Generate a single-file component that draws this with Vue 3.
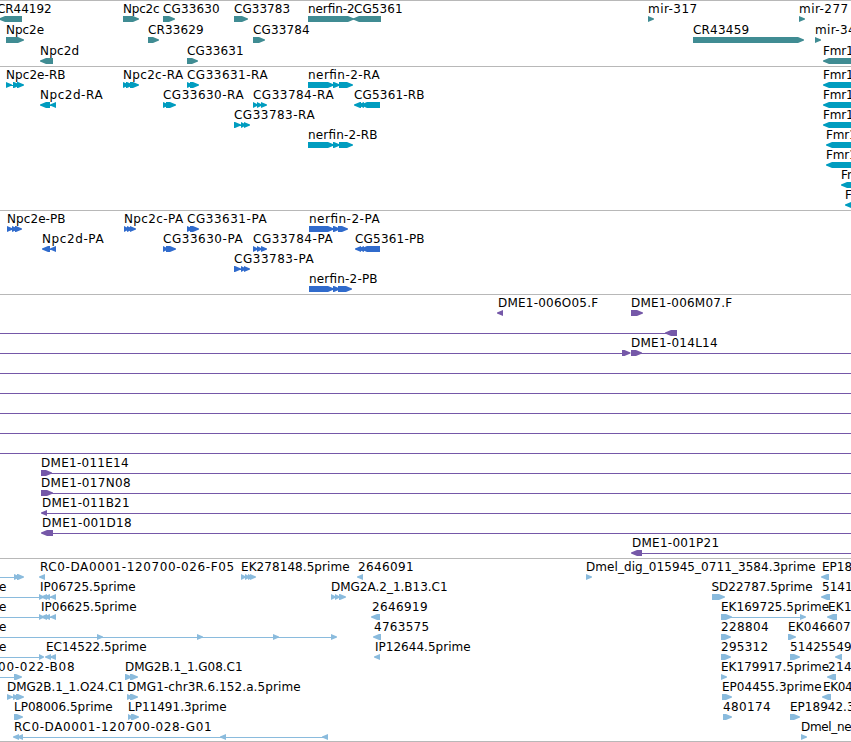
<script setup>
// Label: [row, left edge, right edge, text]
// Shape: [row, direction, [start, end], ...]
// Line:  [row, start, end]
const tracks = [
  {
    name: 'gene', height: 66, pitch: 21, color: '#408c93',
    lines: [],
    labels: [
      [0, -2, 51, 'CR44192'], [0, 124, 159, 'Npc2c'], [0, 164, 219, 'CG33630'], [0, 235, 289.5, 'CG33783'],
      [0, 309, 354, 'nerfin-2'], [0, 355, 402, 'CG5361'], [0, 649, 696.5, 'mir-317'], [0, 800, 847.5, 'mir-277'],
      [1, 7, 43.5, 'Npc2e'], [1, 149, 203, 'CR33629'], [1, 254, 309, 'CG33784'], [1, 694, 748.5, 'CR43459'], [1, 816, 855, 'mir-34'],
      [2, 41, 78.5, 'Npc2d'], [2, 188, 243, 'CG33631'], [2, 824, 853, 'Fmr1']
    ],
    shapes: [
      [0, 'l', [-1, 22]], [0, 'r', [123, 139]], [0, 'r', [163, 175]], [0, 'r', [234, 248]], [0, 'r', [308, 354]],
      [0, 'l', [353, 381]], [0, 'r', [648, 654]], [0, 'r', [799, 805]],
      [1, 'r', [6, 24]], [1, 'r', [148, 159]], [1, 'r', [253, 265]], [1, 'r', [693, 804]], [1, 'r', [815, 821]],
      [2, 'l', [40, 53]], [2, 'r', [187, 198]], [2, 'l', [823, 870]]
    ]
  },
  {
    name: 'transcript', height: 144, pitch: 20, color: '#009cbf',
    lines: [],
    labels: [
      [0, 7, 65, 'Npc2e-RB'], [0, 124, 182.5, 'Npc2c-RA'], [0, 188, 267, 'CG33631-RA'], [0, 309, 379, 'nerfin-2-RA'], [0, 824, 853, 'Fmr1'],
      [1, 41, 102, 'Npc2d-RA'], [1, 164, 243, 'CG33630-RA'], [1, 254, 333, 'CG33784-RA'], [1, 355, 424, 'CG5361-RB'], [1, 824, 853, 'Fmr1'],
      [2, 235, 314, 'CG33783-RA'], [2, 824, 853, 'Fmr1'],
      [3, 309, 377, 'nerfin-2-RB'], [3, 827, 856, 'Fmr1'],
      [4, 827, 856, 'Fmr1'], [5, 842, 858, 'Fm'], [6, 846, 852, 'F']
    ],
    shapes: [
      [0, 'r', [6, 12], [13, 20], [17, 24]], [0, 'r', [123, 129], [126, 133], [130, 139]], [0, 'r', [187, 193], [190, 199]],
      [0, 'r', [308, 334], [333, 340], [339, 353]], [0, 'l', [823, 870]],
      [1, 'l', [40, 50], [50, 56]], [1, 'r', [163, 169], [166, 176]], [1, 'r', [253, 258], [257, 262], [261, 267]],
      [1, 'l', [354, 361], [358, 364], [361, 380]], [1, 'l', [823, 870]],
      [2, 'r', [234, 241], [241, 246], [244, 250]], [2, 'l', [823, 870]],
      [3, 'r', [308, 334], [333, 340], [339, 353]], [3, 'l', [826, 870]],
      [4, 'l', [826, 870]], [5, 'l', [841, 870]], [6, 'l', [845, 870]]
    ]
  },
  {
    name: 'protein', height: 84, pitch: 20, color: '#306bcc',
    lines: [],
    labels: [
      [0, 8, 65, 'Npc2e-PB'], [0, 125, 182.5, 'Npc2c-PA'], [0, 188, 266, 'CG33631-PA'], [0, 310, 379, 'nerfin-2-PA'],
      [1, 43, 103, 'Npc2d-PA'], [1, 164, 242, 'CG33630-PA'], [1, 254, 332, 'CG33784-PA'], [1, 356, 424, 'CG5361-PB'],
      [2, 235, 313, 'CG33783-PA'],
      [3, 310, 377, 'nerfin-2-PB']
    ],
    shapes: [
      [0, 'r', [7, 13], [12, 18], [15, 22]], [0, 'r', [124, 129], [127, 133], [130, 136]], [0, 'r', [187, 193], [190, 199]],
      [0, 'r', [309, 334], [333, 340], [338, 348]],
      [1, 'l', [42, 50], [50, 56]], [1, 'r', [163, 168], [166, 176]], [1, 'r', [253, 258], [257, 262], [261, 267]],
      [1, 'l', [355, 361], [358, 364], [361, 380]],
      [2, 'r', [234, 241], [241, 246], [244, 250]],
      [3, 'r', [309, 334], [333, 340], [338, 352]]
    ]
  },
  {
    name: 'clone', height: 264, pitch: 20, color: '#7558a8',
    lines: [
      [1, 0, 668], [2, 0, 624], [2, 640, 851], [3, 0, 851], [4, 0, 851], [5, 0, 851], [6, 0, 851], [7, 0, 851],
      [8, 49, 851], [9, 49, 851], [10, 47, 851], [11, 53, 851], [12, 642, 851]
    ],
    labels: [
      [0, 499, 597.5, 'DME1-006O05.F'], [0, 632, 731.5, 'DME1-006M07.F'],
      [2, 632, 717, 'DME1-014L14'],
      [8, 42, 128, 'DME1-011E14'], [9, 42, 130, 'DME1-017N08'], [10, 43, 129, 'DME1-011B21'], [11, 43, 131, 'DME1-001D18'],
      [12, 633, 718.5, 'DME1-001P21']
    ],
    shapes: [
      [0, 'l', [497, 503]], [0, 'r', [631, 643]],
      [1, 'l', [665, 677]], [2, 'r', [622, 630.5]], [2, 'r', [631, 642]],
      [8, 'r', [41, 52]], [9, 'r', [41, 53]], [10, 'l', [41, 47]], [11, 'l', [41, 53]], [12, 'l', [631, 642]]
    ]
  },
  {
    name: 'est', height: 183, pitch: 20, color: '#8abbdd',
    lines: [
      [0, 0, 16], [1, 0, 40], [2, 0, 40], [2, 728, 801], [3, 0, 331], [4, 0, 40], [5, 0, 15], [8, 22, 323]
    ],
    labels: [
      [0, 41, 233.5, 'RC0-DA0001-120700-026-F05'], [0, 242, 349, 'EK278148.5prime'], [0, 359, 413, '2646091'],
      [0, 587, 815, 'Dmel_dig_015945_0711_3584.3prime'], [0, 823, 851.5, 'EP18'],
      [1, 0, 6, 'e'], [1, 41, 135, 'IP06725.5prime'], [1, 332, 447, 'DMG2A.2_1.B13.C1'], [1, 712.5, 812, 'SD22787.5prime'], [1, 823, 852, '5141'],
      [2, 0, 6, 'e'], [2, 42, 136, 'IP06625.5prime'], [2, 373, 427, '2646919'], [2, 722, 828.5, 'EK169725.5prime'], [2, 829, 851, 'EK1'],
      [3, 0, 6, 'e'], [3, 375, 428.5, '4763575'], [3, 722, 768, '228804'], [3, 789, 850, 'EK046607'],
      [4, 0, 6, 'e'], [4, 47, 146, 'EC14522.5prime'], [4, 376, 470, 'IP12644.5prime'], [4, 722, 767.5, '295312'], [4, 791, 851, '51425549'],
      [5, -1, 74, '00-022-B08'], [5, 126, 242, 'DMG2B.1_1.G08.C1'], [5, 722, 828.5, 'EK179917.5prime'], [5, 829, 851, '214'],
      [6, 8, 123.5, 'DMG2B.1_1.O24.C1'], [6, 128, 300, 'DMG1-chr3R.6.152.a.5prime'], [6, 723, 821, 'EP04455.3prime'], [6, 824, 852, 'EK04'],
      [7, 15, 112, 'LP08006.5prime'], [7, 129, 226, 'LP11491.3prime'], [7, 724, 770, '480174'], [7, 791, 854, 'EP18942.3'],
      [8, 15, 211, 'RC0-DA0001-120700-028-G01'], [8, 802, 851, 'Dmel_ne']
    ],
    shapes: [
      [0, 'r', [14, 20], [17, 24]], [0, 'l', [39, 45]], [0, 'r', [241, 246], [245, 250], [248, 253], [250, 256]], [0, 'l', [357, 363]],
      [0, 'r', [586, 592]], [0, 'l', [821, 829]],
      [1, 'r', [39, 44]], [1, 'l', [41, 47], [44, 50], [50, 56]], [1, 'r', [331, 336], [335, 340], [339, 346]], [1, 'r', [712, 725]], [1, 'l', [821, 830]],
      [2, 'r', [39, 44]], [2, 'l', [41, 47], [44, 50], [50, 56]], [2, 'l', [371, 380]], [2, 'r', [721, 732]], [2, 'r', [800, 806]], [2, 'l', [827, 837]],
      [3, 'r', [97, 103]], [3, 'r', [197, 203]], [3, 'r', [273, 279]], [3, 'r', [331, 337]], [3, 'l', [373, 381]], [3, 'r', [721, 731]], [3, 'r', [788, 796]],
      [4, 'r', [39, 44]], [4, 'l', [45, 51], [50, 56]], [4, 'l', [374, 380]], [4, 'r', [721, 731]], [4, 'r', [790, 800]], [4, 'l', [835, 842]],
      [5, 'r', [14, 22]], [5, 'r', [125, 132], [130, 138]], [5, 'r', [721, 727]], [5, 'l', [827, 836]],
      [6, 'r', [7, 13], [13, 19], [16, 24]], [6, 'r', [127, 133], [130, 138]], [6, 'r', [722, 732]], [6, 'l', [822, 831]],
      [7, 'r', [14, 23]], [7, 'r', [128, 133], [131, 139]], [7, 'r', [723, 732]], [7, 'r', [790, 800]],
      [8, 'l', [13, 19], [17, 23]], [8, 'l', [220, 226]], [8, 'l', [322, 328]], [8, 'r', [801, 807]]
    ]
  }
]

const HEAD = 6

function shapePath(track, [row, dir, ...blocks]) {
  const top = 16 + row * track.pitch
  return blocks.map(([a, b]) => {
    const head = Math.min(HEAD, b - a)
    return dir === 'r'
      ? `M${a} ${top}V${top + 6}H${b - head}L${b} ${top + 3.5}V${top + 2.5}L${b - head} ${top}Z`
      : `M${a + head} ${top}L${a} ${top + 2.5}V${top + 3.5}L${a + head} ${top + 6}H${b}V${top}Z`
  })
}

// Thin join drawn through the blocks of a spliced feature
function joins(track) {
  return track.shapes
    .filter(s => s.length > 3)
    .map(s => [s[0], s[2][0] + 1, s[s.length - 1][1] - 1])
}
</script>

<template>
  <main class="browser">
    <section v-for="track in tracks" :key="track.name" class="track">
      <svg class="canvas" width="851" :height="track.height">
        <rect
          v-for="(l, i) in [...track.lines, ...joins(track)]" :key="'n' + i"
          :x="l[1]" :y="19 + l[0] * track.pitch" :width="l[2] - l[1]" height="1" :fill="track.color"
        />
        <g v-for="(s, i) in track.shapes" :key="'s' + i" :fill="track.color">
          <path v-for="(d, j) in shapePath(track, s)" :key="j" :d="d" />
        </g>
        <rect class="rule" x="0" y="0" width="851" height="1" />
        <text
          v-for="(t, i) in track.labels" :key="'t' + i" class="label"
          :x="t[1] - 1" :y="13 + t[0] * track.pitch" :textLength="t[2] - t[1] + 1.6"
        >{{ t[3] }}</text>
      </svg>
    </section>
    <div class="end"></div>
  </main>
</template>

<style>
body {
  background: #fff;
  overflow: hidden;
}
</style>

<style scoped>
.browser {
  display: flex;
  flex-direction: column;
  width: 851px;
  height: 742px;
  overflow: hidden;
  background: #fff;
}
.track {
  flex: none;
}
.canvas {
  display: block;
  overflow: hidden;
}
.rule {
  fill: #b8b8b8;
}
.label {
  font-family: "DejaVu Sans", sans-serif;
  font-size: 12px;
  fill: #000;
}
.end {
  height: 1px;
  background: #b8b8b8;
}
</style>
